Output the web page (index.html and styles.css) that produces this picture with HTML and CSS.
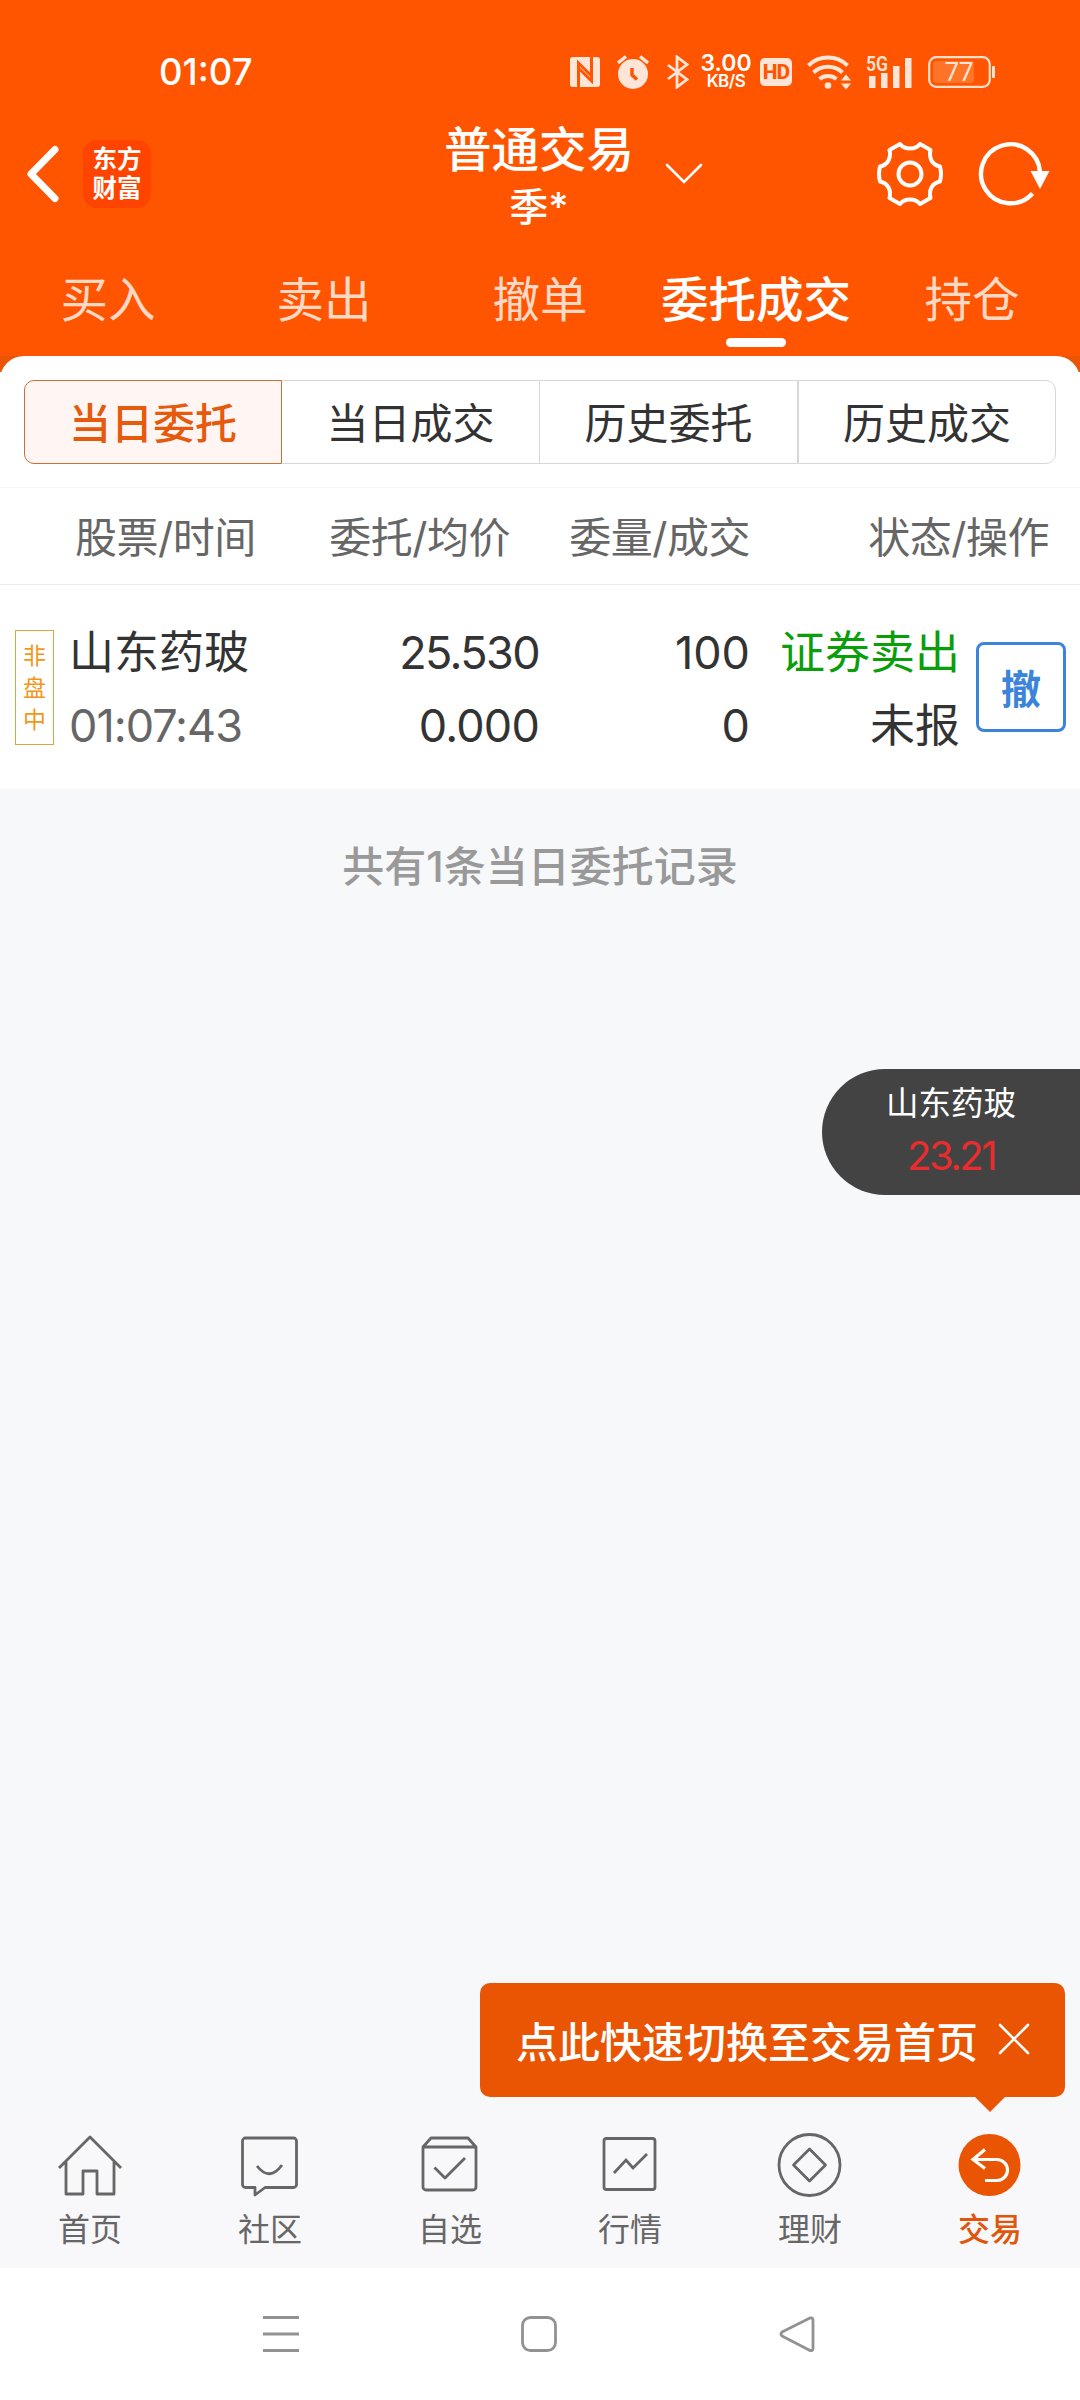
FILE: index.html
```html
<!DOCTYPE html>
<html lang="zh-CN">
<head>
    <meta charset="UTF-8">
    <meta name="viewport" content="width=device-width, initial-scale=1.0">
    <title>普通交易</title>
    <link rel="stylesheet" href="styles.css">
</head>
<body>
    <header class="top">
        <div class="status-bar">
            <span class="clock">01:07</span>
            <div class="status-icons">
                <svg class="nfc" width="30" height="30" viewBox="0 0 30 30">
                    <rect width="30" height="30" rx="3" fill="#ffe4d8"/>
                    <path d="M8.500 30V6l12 12M21.500 0v24l-12-12" fill="none" stroke="#ff5500" stroke-width="3"/>
                </svg>
                <svg class="alarm" width="32" height="34" viewBox="0 0 32 34">
                    <circle cx="16" cy="19" r="15" fill="#ffe4d8"/>
                    <path d="M1 8l8-6.500M31 8l-8-6.500" stroke="#ffe4d8" stroke-width="3.500"/>
                    <path d="M15 13v7l5 4.500" fill="none" stroke="#ff5500" stroke-width="3.500"/>
                </svg>
                <svg class="bluetooth" width="22" height="34" viewBox="0 0 22 34">
                    <path d="M1 10l19 14.500-10 7.500V2l10 7.500L1 24" fill="none" stroke="#ffe4d8" stroke-width="2.800"/>
                </svg>
                <div class="speed"><span>3.00</span><small>KB/S</small></div>
                <span class="hd">HD</span>
                <svg class="wifi" width="46" height="36" viewBox="0 0 46 36">
                    <path d="M1.500 11.500a28 28 0 0 1 39 0M6.500 18.500a21 21 0 0 1 29 0M12.500 25a13.500 13.500 0 0 1 17 0" fill="none" stroke="#ffe4d8" stroke-width="4"/>
                    <circle cx="21" cy="31.500" r="3.300" fill="#ffe4d8"/>
                    <path d="M34 26.500l5-6 5 6zM34 29.500l5 6 5-6z" fill="#ffe4d8"/>
                </svg>
                <svg class="signal" width="48" height="34" viewBox="0 0 48 34">
                    <text x="0" y="16" class="signal-text" textLength="22" lengthAdjust="spacingAndGlyphs">5G</text>
                    <path d="M3 21h6.500v12H3zM15 18h6.500v15H15zM27 11h6.500v22H27zM39 3h6.500v30H39z" fill="#ffe4d8"/>
                </svg>
                <svg class="battery" width="68" height="32" viewBox="0 0 68 32">
                    <rect x="1.200" y="1.200" width="60.600" height="29.600" rx="7" fill="none" stroke="#ffe0cc" stroke-width="2.200"/>
                    <rect x="5" y="5" width="41" height="22" rx="3" fill="#ff7426"/>
                    <rect x="64" y="10" width="3" height="12" rx="1" fill="#ffe0cc"/>
                    <text x="31" y="25" class="battery-text" text-anchor="middle">77</text>
                </svg>
            </div>
        </div>

        <div class="title-bar">
            <svg class="back" width="34" height="58" viewBox="0 0 34 58">
                <path d="M29 4.500L5 29l24 24.500" fill="none" stroke="#fff" stroke-width="7" stroke-linecap="round" stroke-linejoin="round"/>
            </svg>
            <div class="logo"><span>东方</span><span>财富</span></div>
            <div class="title">
                <h1>普通交易</h1>
                <p>季*</p>
            </div>
            <svg class="arrow-down" width="38" height="22" viewBox="0 0 38 22">
                <path d="M2 2l17 17L36 2" fill="none" stroke="#fff" stroke-width="2.600" stroke-linecap="round"/>
            </svg>
            <svg class="gear" width="68" height="68" viewBox="-34 -34 68 68">
                <path d="M-10-30Q-6.500-25.500 0-25.500Q6.500-25.500 10-30L20.500-24C18.500-15.500 22.500-9 30-7.500Q32 0 30 7.500C22.500 9 18.500 15.500 20.500 24L10 30Q6.500 25.500 0 25.500Q-6.500 25.500-10 30L-20.500 24C-18.500 15.500-22.500 9-30 7.500Q-32 0-30-7.500C-22.500-9-18.500-15.500-20.500-24Z" fill="none" stroke="#fff" stroke-width="4" stroke-linejoin="round"/>
                <circle r="11.500" fill="none" stroke="#fff" stroke-width="4"/>
            </svg>
            <svg class="refresh" width="72" height="68" viewBox="0 0 72 68">
                <path d="M62 32A29.500 29.500 0 1 0 54.500 53.500" fill="none" stroke="#fff" stroke-width="4.400"/>
                <path d="M52.500 31h19L62 49z" fill="#fff"/>
            </svg>
        </div>

        <nav class="tabs">
            <a>买入</a>
            <a>卖出</a>
            <a>撤单</a>
            <a class="active">委托成交</a>
            <a>持仓</a>
        </nav>
    </header>

    <main>
        <section class="panel-wrap">
            <div class="panel">
                <div class="segment">
                    <button class="active">当日委托</button>
                    <button>当日成交</button>
                    <button>历史委托</button>
                    <button>历史成交</button>
                </div>
                <div class="list-head">
                    <span>股票/时间</span>
                    <span>委托/均价</span>
                    <span>委量/成交</span>
                    <span>状态/操作</span>
                </div>
                <div class="order">
                    <div class="tag"><span>非</span><span>盘</span><span>中</span></div>
                    <div class="cell name"><span>山东药玻</span><span class="time">01:07:43</span></div>
                    <div class="cell"><span class="price">25.530</span><span class="average">0.000</span></div>
                    <div class="cell"><span>100</span><span>0</span></div>
                    <div class="cell"><span class="sell">证券卖出</span><span>未报</span></div>
                    <button class="cancel">撤</button>
                </div>
            </div>
        </section>
        <p class="total">共有1条当日委托记录</p>
    </main>

    <div class="float-quote">
        <span>山东药玻</span>
        <strong>23.21</strong>
    </div>

    <div class="tip">
        <span>点此快速切换至交易首页</span>
        <svg width="32" height="32" viewBox="0 0 32 32">
            <path d="M2 2l28 28M30 2L2 30" stroke="#fff" stroke-width="2.600" stroke-linecap="round"/>
        </svg>
    </div>

    <nav class="bottom-nav">
        <a>
            <svg width="68" height="68" viewBox="0 0 68 68">
                <path d="M3 38L34 7l31 31M10 32v32h17V41h14v23h17V32" stroke-linejoin="round"/>
            </svg>
            首页
        </a>
        <a>
            <svg width="68" height="68" viewBox="0 0 68 68">
                <path d="M9 8h48.500a3 3 0 0 1 3 3v43.500a3 3 0 0 1-3 3H29L19 65v-7.500H9.500a3 3 0 0 1-3-3V11a3 3 0 0 1 3-3zM21 36q12.500 16 25-1" stroke-linejoin="round"/>
            </svg>
            社区
        </a>
        <a>
            <svg width="68" height="68" viewBox="0 0 68 68">
                <path d="M7 17h53v40a3 3 0 0 1-3 3H10a3 3 0 0 1-3-3zl8-9h37l8 9M18.500 37.500L29 48l20-20" stroke-linejoin="round"/>
            </svg>
            自选
        </a>
        <a>
            <svg width="68" height="68" viewBox="0 0 68 68">
                <rect x="8" y="8.500" width="51" height="51" rx="2.500"/>
                <path d="M18 43l12-13 7 8 14-14"/>
            </svg>
            行情
        </a>
        <a>
            <svg width="68" height="68" viewBox="0 0 68 68">
                <circle cx="33.500" cy="35" r="30.500"/>
                <path d="M33.500 19l16 16-16 16-16-16z" stroke-linejoin="round"/>
            </svg>
            理财
        </a>
        <a class="active">
            <svg width="68" height="68" viewBox="0 0 68 68">
                <circle class="fill" cx="33.500" cy="35" r="31"/>
                <path class="line" d="M29 19.500L17 29.500l12 9M17 29.500h24a10.500 10.500 0 0 1 0 21H29"/>
            </svg>
            交易
        </a>
    </nav>

    <div class="system-nav">
        <svg width="36" height="36" viewBox="0 0 36 36">
            <path d="M0 1.500h36M0 18h36M0 34.500h36"/>
        </svg>
        <svg width="36" height="36" viewBox="0 0 36 36">
            <rect x="1.500" y="1.500" width="33" height="33" rx="8"/>
        </svg>
        <svg width="36" height="36" viewBox="0 0 36 36">
            <path d="M31 2L3 16q-2 2 0 4l28 14.500q3 .5 3-2V4q0-2.500-3-2z" stroke-linejoin="round"/>
        </svg>
    </div>
</body>
</html>
```
FILE: styles.css
```css
* {
    box-sizing: border-box;
}
body {
    margin: 0;
    width: 1080px;
    height: 2400px;
    display: flex;
    flex-direction: column;
    position: relative;
    background-color: #f7f8fa;
    color: #333;
    font-family: Inter, "Noto Sans CJK SC", sans-serif;
    overflow: hidden;
}
h1, p {
    margin: 0;
    font-weight: 500;
}
button {
    padding: 0;
    background: none;
    color: inherit;
    font-family: inherit;
}
svg {
    display: block;
    flex: none;
}

/* header */
.top {
    height: 356px;
    background-color: #ff5500;
    color: #fff;
}
.status-bar {
    height: 120px;
    padding: 24px 84px 0 159px;
    display: flex;
    align-items: center;
    justify-content: space-between;
}
.clock {
    font-size: 36.500px;
    font-weight: 500;
    line-height: 48px;
}
.status-icons {
    display: flex;
    align-items: center;
    height: 36px;
}
.alarm {
    margin-left: 17px;
}
.bluetooth {
    margin-left: 18px;
}
.speed {
    width: 52px;
    margin-left: 11px;
    display: flex;
    flex-direction: column;
    align-items: center;
    font-weight: 600;
}
.speed span {
    font-size: 23px;
    line-height: 19px;
}
.speed small {
    font-size: 17px;
    line-height: 17px;
    letter-spacing: -0.5px;
}
.hd {
    width: 32px;
    height: 28px;
    margin-left: 8px;
    border-radius: 5px;
    background-color: #ffe4d8;
    color: #ff5500;
    font-family: Roboto, sans-serif;
    font-size: 21px;
    font-weight: 800;
    line-height: 29px;
    letter-spacing: -1px;
    text-align: center;
}
.wifi {
    margin-left: 15px;
}
.signal {
    margin-left: 13px;
    overflow: visible;
}
.signal-text {
    fill: #ffe4d8;
    font-family: Roboto, sans-serif;
    font-size: 21px;
    font-weight: 600;
}
.battery {
    margin-left: 14px;
}
.battery-text {
    fill: #ffe4d8;
    font-family: Roboto, sans-serif;
    font-size: 26px;
}
.title-bar {
    height: 108px;
    padding-left: 26px;
    display: flex;
    align-items: center;
}
.logo {
    width: 68px;
    height: 68px;
    margin-left: 23px;
    border-radius: 14px;
    background-color: #ff4400;
    display: flex;
    flex-direction: column;
    align-items: center;
    justify-content: center;
    font-size: 24.500px;
    font-weight: 700;
    line-height: 29px;
}
.title {
    width: 200px;
    margin-left: 288px;
    padding-top: 6px;
    text-align: center;
}
.title h1 {
    font-size: 47.500px;
    line-height: 60px;
}
.title p {
    font-size: 39px;
    line-height: 54px;
}
.arrow-down {
    margin-left: 26px;
}
.gear {
    margin-left: 173px;
}
.refresh {
    margin-left: 34px;
}
.tabs {
    height: 128px;
    display: grid;
    grid-template-columns: repeat(5, 216px);
}
.tabs a {
    padding-top: 38px;
    display: flex;
    flex-direction: column;
    align-items: center;
    color: #ffd9c6;
    font-size: 47.500px;
    line-height: 68px;
}
.tabs .active {
    color: #fff;
    font-weight: 500;
}
.tabs .active::after {
    content: "";
    width: 60px;
    height: 9px;
    margin-top: 4px;
    border-radius: 5px;
    background-color: #fff;
}

/* order list */
.panel-wrap {
    background: linear-gradient(#ea5504 16px, #fff 16px);
}
.panel {
    height: 433px;
    padding-top: 24px;
    border-radius: 24px 24px 0 0;
    background-color: #fff;
}
.segment {
    height: 84px;
    margin: 0 24px;
    display: grid;
    grid-template-columns: repeat(4, 1fr);
}
.segment button {
    padding-top: 3px;
    border: 1px solid #d5d7d8;
    border-left-width: 0;
    font-size: 42px;
    line-height: 79px;
}
.segment button:last-child {
    border-left-width: 1px;
    border-radius: 0 10px 10px 0;
}
.segment .active {
    border: 1px solid #c8703c;
    border-radius: 10px 0 0 10px;
    background-color: #fff6f3;
    color: #e55a0c;
    font-weight: 500;
}
.list-head {
    height: 98px;
    margin-top: 23px;
    padding: 0 31px 0 75px;
    display: grid;
    grid-template-columns: 180px 255px 240px 299px;
    border-top: 1px solid #f5f5f5;
    border-bottom: 1px solid #ececec;
    color: #666;
    font-size: 42px;
    line-height: 99px;
    letter-spacing: -0.5px;
    text-align: right;
    white-space: nowrap;
}
.list-head span:first-child {
    text-align: left;
}
.order {
    height: 204px;
    padding-left: 15px;
    display: flex;
    align-items: center;
}
.tag {
    width: 39px;
    height: 115px;
    margin-right: 15px;
    padding-top: 9px;
    border: 1px solid #dda53c;
    display: flex;
    flex-direction: column;
    align-items: center;
    color: #f3961a;
    font-size: 23px;
    line-height: 32px;
}
.cell {
    width: 211px;
    padding-top: 4px;
    display: flex;
    flex-direction: column;
    text-align: right;
    font-size: 45px;
    line-height: 73px;
    white-space: nowrap;
}
.name {
    width: 259px;
    text-align: left;
}
.time {
    color: #666;
    letter-spacing: -1px;
}
.price {
    letter-spacing: -1.600px;
}
.average {
    letter-spacing: -0.800px;
}
.order .cell:nth-child(5) {
    width: 210px;
}
.sell {
    color: #0a9e0a;
}
.cancel {
    width: 90px;
    height: 90px;
    margin-left: 16px;
    border: 3px solid #3c84d9;
    border-radius: 8px;
    color: #3c84d9;
    font-size: 40px;
    font-weight: 600;
}
.total {
    padding-top: 46px;
    color: #999;
    font-size: 42px;
    line-height: 63px;
    text-align: center;
}

/* floating items over the page */
.float-quote {
    position: absolute;
    top: 1069px;
    right: 0;
    width: 258px;
    height: 126px;
    padding-top: 9px;
    border-radius: 63px 0 0 63px;
    background-color: #434343;
    color: #fff;
    font-size: 32.500px;
    line-height: 52px;
    display: flex;
    flex-direction: column;
    align-items: center;
}
.float-quote strong {
    color: #ea2c2c;
    font-size: 40px;
    font-weight: 400;
    letter-spacing: -2.500px;
}
.tip {
    position: absolute;
    top: 1983px;
    left: 480px;
    width: 585px;
    height: 114px;
    padding: 0 35px 2px 36px;
    border-radius: 10px;
    background-color: #ea5504;
    color: #fff;
    font-size: 42px;
    font-weight: 500;
    display: flex;
    align-items: center;
    justify-content: space-between;
}
.tip::after {
    content: "";
    position: absolute;
    top: 113px;
    left: 494px;
    border: 16px solid transparent;
    border-top-color: #ea5504;
    border-bottom: none;
}

/* bottom bars */
.bottom-nav {
    height: 159px;
    margin-top: auto;
    padding-top: 21px;
    display: grid;
    grid-template-columns: repeat(6, 180px);
    background-color: #f8f8fb;
}
.bottom-nav a {
    display: flex;
    flex-direction: column;
    align-items: center;
    color: #666;
    font-size: 32px;
    line-height: 63px;
}
.bottom-nav svg {
    fill: none;
    stroke: #666;
    stroke-width: 2.800;
}
.bottom-nav .active {
    color: #e0560c;
    font-weight: 500;
}
.bottom-nav .fill {
    fill: #ea5504;
    stroke: none;
}
.bottom-nav .line {
    stroke: #fff;
    stroke-width: 3.200;
}
.system-nav {
    height: 132px;
    padding: 48px 265px 0 263px;
    display: flex;
    justify-content: space-between;
    background-color: #fff;
}
.system-nav svg {
    fill: none;
    stroke: #929292;
    stroke-width: 2.800;
}
```
